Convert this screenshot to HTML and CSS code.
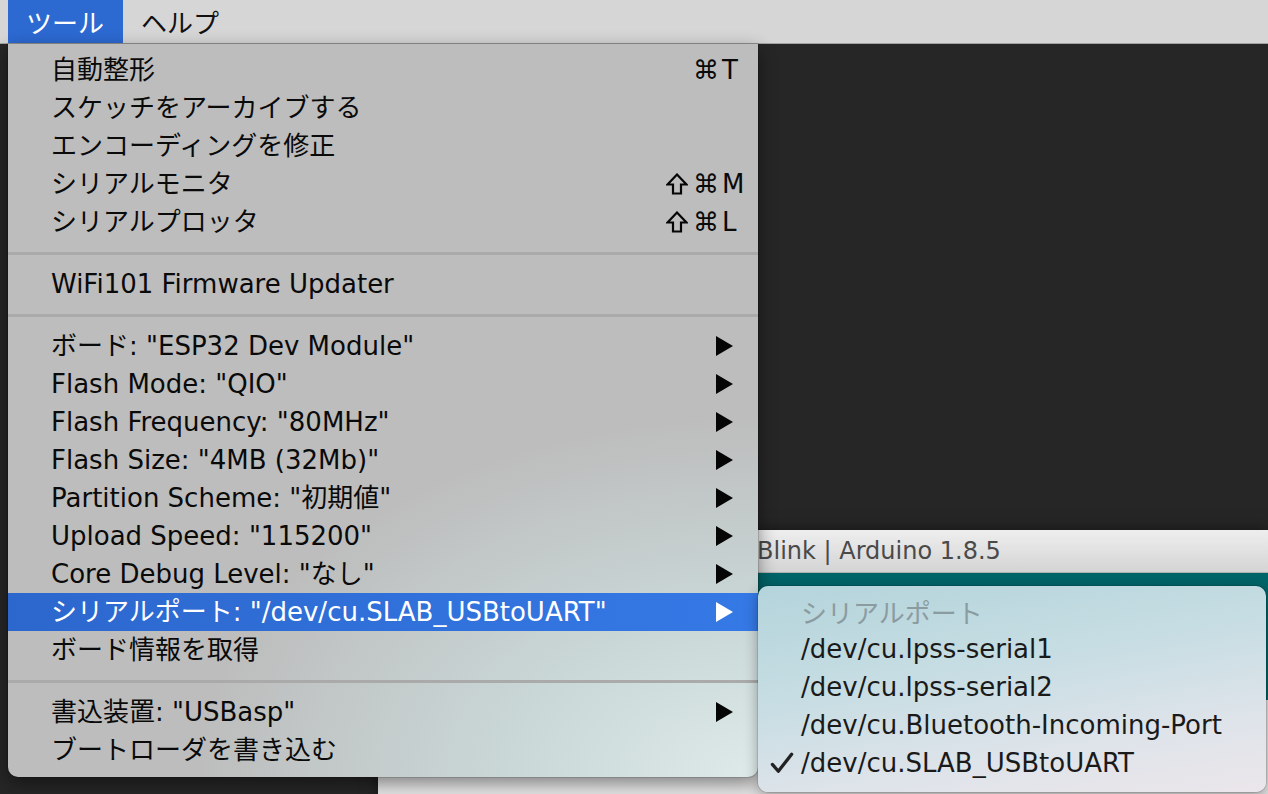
FILE: index.html
```html
<!DOCTYPE html>
<html lang="ja">
<head>
<meta charset="utf-8">
<title>Arduino ツール メニュー</title>
<link rel="stylesheet" href="styles.css">
</head>
<body>
<div class="screen">
  <div class="menubar">
    <div class="mb-item active">ツール</div>
    <div class="mb-item">ヘルプ</div>
  </div>

  <div class="desktop">
    <div class="arduino">
      <div class="titlebar">Blink | Arduino 1.8.5</div>
      <div class="toolbar"></div>
      <div class="editor"></div>
    </div>

    <div class="menu">
      <div class="row"><span class="label">自動整形</span><span class="sc"><span class="mods">⌘</span><span class="key">T</span></span></div>
      <div class="row"><span class="label">スケッチをアーカイブする</span></div>
      <div class="row"><span class="label">エンコーディングを修正</span></div>
      <div class="row"><span class="label">シリアルモニタ</span><span class="sc"><span class="mods"><svg class="shift" viewBox="0 0 22 22"><polygon points="11,1.5 20.5,11.5 15,11.5 15,20.5 7,20.5 7,11.5 1.5,11.5"/></svg>⌘</span><span class="key">M</span></span></div>
      <div class="row"><span class="label">シリアルプロッタ</span><span class="sc"><span class="mods"><svg class="shift" viewBox="0 0 22 22"><polygon points="11,1.5 20.5,11.5 15,11.5 15,20.5 7,20.5 7,11.5 1.5,11.5"/></svg>⌘</span><span class="key">L</span></span></div>
      <div class="sep"></div>
      <div class="row"><span class="label">WiFi101 Firmware Updater</span></div>
      <div class="sep"></div>
      <div class="row"><span class="label">ボード: "ESP32 Dev Module"</span><svg class="arrow" viewBox="0 0 17 20"><polygon points="0,0 17,10 0,20"/></svg></div>
      <div class="row"><span class="label">Flash Mode: "QIO"</span><svg class="arrow" viewBox="0 0 17 20"><polygon points="0,0 17,10 0,20"/></svg></div>
      <div class="row"><span class="label">Flash Frequency: "80MHz"</span><svg class="arrow" viewBox="0 0 17 20"><polygon points="0,0 17,10 0,20"/></svg></div>
      <div class="row"><span class="label">Flash Size: "4MB (32Mb)"</span><svg class="arrow" viewBox="0 0 17 20"><polygon points="0,0 17,10 0,20"/></svg></div>
      <div class="row"><span class="label">Partition Scheme: "初期値"</span><svg class="arrow" viewBox="0 0 17 20"><polygon points="0,0 17,10 0,20"/></svg></div>
      <div class="row"><span class="label">Upload Speed: "115200"</span><svg class="arrow" viewBox="0 0 17 20"><polygon points="0,0 17,10 0,20"/></svg></div>
      <div class="row"><span class="label">Core Debug Level: "なし"</span><svg class="arrow" viewBox="0 0 17 20"><polygon points="0,0 17,10 0,20"/></svg></div>
      <div class="row selected"><span class="label">シリアルポート: "/dev/cu.SLAB_USBtoUART"</span><svg class="arrow" viewBox="0 0 17 20"><polygon points="0,0 17,10 0,20"/></svg></div>
      <div class="row"><span class="label">ボード情報を取得</span></div>
      <div class="sep"></div>
      <div class="row"><span class="label">書込装置: "USBasp"</span><svg class="arrow" viewBox="0 0 17 20"><polygon points="0,0 17,10 0,20"/></svg></div>
      <div class="row"><span class="label">ブートローダを書き込む</span></div>
    </div>

    <div class="submenu">
      <div class="srow disabled"><span class="check"></span><span class="label">シリアルポート</span></div>
      <div class="srow"><span class="check"></span><span class="label">/dev/cu.lpss-serial1</span></div>
      <div class="srow"><span class="check"></span><span class="label">/dev/cu.lpss-serial2</span></div>
      <div class="srow"><span class="check"></span><span class="label">/dev/cu.Bluetooth-Incoming-Port</span></div>
      <div class="srow"><span class="check"><svg class="tick" viewBox="0 0 26 24"><path d="M2.5 13.5 L9 21 L23.5 2.5"/></svg></span><span class="label">/dev/cu.SLAB_USBtoUART</span></div>
    </div>
  </div>
</div>
</body>
</html>
```

FILE: styles.css
```css
* { box-sizing: border-box; }

html, body {
  margin: 0;
  padding: 0;
  background: #262626;
}

body {
  font-family: "DejaVu Sans", "Noto Sans CJK JP", sans-serif;
  font-size: 26px;
  color: #0a0a0a;
}

.screen {
  width: 1268px;
  height: 794px;
  overflow: hidden;
  display: flex;
  flex-direction: column;
}

.menubar {
  height: 44px;
  flex: 0 0 44px;
  background: #d6d6d6;
  border-bottom: 1px solid #a3a3a3;
  display: flex;
  padding-left: 8px;
}

.mb-item {
  height: 43px;
  line-height: 43px;
  padding: 0 19px 0 18px;
  font-family: "Noto Sans CJK JP", sans-serif;
  font-size: 26px;
  color: #111;
}

.mb-item.active {
  background: #2c69d1;
  color: #fff;
}

.desktop {
  flex: 1;
  position: relative;
  background: #262626;
}

/* Arduino window lying on the desktop */
.arduino {
  position: absolute;
  left: 378px;
  top: 486px;
  right: 0;
  bottom: 0;
  display: flex;
  flex-direction: column;
  box-shadow: 0 0 14px rgba(0,0,0,0.5);
}

.titlebar {
  height: 43px;
  flex: 0 0 43px;
  background: linear-gradient(#eeeeee, #d4d4d4);
  border-bottom: 1px solid #b0b0b0;
  padding-left: 379px;
  line-height: 43px;
  font-size: 24px;
  color: #4a4a4a;
  white-space: nowrap;
}

.toolbar {
  height: 127px;
  flex: 0 0 127px;
  background: #006468;
}

.editor {
  flex: 1;
  background: #e4e4e4;
}

/* main dropdown menu */
.menu {
  position: absolute;
  left: 8px;
  top: 0;
  width: 750px;
  padding: 7px 0 8px;
  border-radius: 0 0 10px 10px;
  background:
    radial-gradient(ellipse 560px 360px at 100% 100%, rgba(222,234,234,1) 0%, rgba(206,224,224,0.75) 45%, rgba(189,189,189,0) 100%),
    #bdbdbd;
  box-shadow: 0 6px 18px rgba(0,0,0,0.45), 0 0 0 1px rgba(0,0,0,0.12);
  z-index: 2;
}

.row {
  height: 38px;
  display: flex;
  align-items: center;
  padding-left: 43px;
  white-space: nowrap;
}

.row .label {
  flex: 1;
  line-height: 38px;
}

.row.selected {
  background: linear-gradient(90deg, #2c67cd, #3579e6);
  color: #fff;
}

.sc {
  display: flex;
  line-height: 38px;
}

.mods {
  display: flex;
  align-items: center;
  justify-content: flex-end;
}

.shift {
  width: 22px;
  height: 22px;
  margin-right: 5px;
  fill: none;
  stroke: #050505;
  stroke-width: 2.2;
  stroke-linejoin: miter;
}

.key {
  width: 39px;
  padding-left: 3px;
}

.arrow {
  width: 17px;
  height: 20px;
  margin-right: 25px;
  fill: #050505;
}

.row.selected .arrow {
  fill: #fff;
}

.sep {
  height: 3px;
  margin: 11px 0 10px;
  background: #aaaaaa;
}

/* serial port submenu */
.submenu {
  position: absolute;
  left: 758px;
  top: 542px;
  width: 508px;
  height: 206px;
  padding-top: 6px;
  border-radius: 10px;
  background: linear-gradient(170deg, #b4d4db 0%, #c6dde3 40%, #dfe4ea 75%, #ebe6ea 100%);
  box-shadow: 0 4px 14px rgba(0,0,0,0.35), 0 0 0 1px rgba(0,0,0,0.1);
  z-index: 3;
}

.srow {
  height: 38px;
  display: flex;
  align-items: center;
  white-space: nowrap;
  color: #1a1a1a;
}

.srow .check {
  width: 43px;
  height: 38px;
  padding-left: 12px;
  display: flex;
  align-items: center;
}

.tick {
  width: 24px;
  height: 22px;
  fill: none;
  stroke: #222;
  stroke-width: 3.6;
  stroke-linecap: round;
  stroke-linejoin: round;
}

.srow.disabled {
  color: #8b9ca1;
}
```
